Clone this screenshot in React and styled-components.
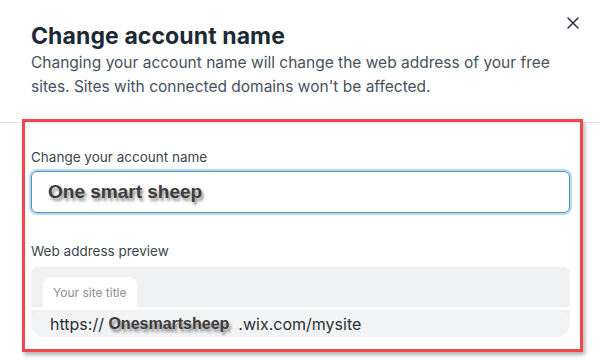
import styled, { createGlobalStyle } from "styled-components";

const GlobalStyle = createGlobalStyle`
  html, body {
    margin: 0;
    padding: 0;
    background: #ffffff;
  }
  body {
    font-family: "Inter", "Noto Sans", sans-serif;
  }
`;

const Modal = styled.div`
  position: relative;
  width: 600px;
  height: 361px;
  overflow: hidden;
  background: #ffffff;
`;

const Header = styled.div`
  box-sizing: border-box;
  height: 123px;
  padding: 22px 30px 0 31px;
  border-bottom: 1px solid #e3e5e8;
`;

const Title = styled.h1`
  margin: 0;
  font-size: 23px;
  line-height: 29px;
  font-weight: 700;
  color: #1c2a36;
  letter-spacing: 0.1px;
`;

const Subtitle = styled.p`
  margin: 0;
  font-size: 15.5px;
  line-height: 24px;
  color: #46525e;
`;

const CloseBtn = styled.button`
  position: absolute;
  top: 14px;
  right: 18px;
  width: 18px;
  height: 18px;
  padding: 0;
  border: none;
  background: none;
  display: flex;
  align-items: center;
  justify-content: center;
  cursor: pointer;
`;

const Highlight = styled.section`
  box-sizing: border-box;
  width: 561px;
  height: 233px;
  margin: -4px 0 0 22px;
  padding: 26px 10px 0 6px;
  border: 3px solid #f0474c;
  box-shadow: 2px 3px 4px rgba(0, 0, 0, 0.3);
  display: flex;
  flex-direction: column;
`;

const Label = styled.div`
  font-size: 13.5px;
  line-height: 18px;
  color: #3d4650;
  margin-bottom: ${(p) => p.$gap}px;
`;

const Input = styled.div`
  box-sizing: border-box;
  height: 42px;
  flex-shrink: 0;
  border: 1px solid #5f8fb4;
  border-radius: 6px;
  box-shadow: 0 0 0 2px #b3dcf8;
  display: flex;
  align-items: center;
  padding: 0 16px;
  margin-bottom: 29px;
`;

const BoldShadow = styled.span`
  font-family: "Liberation Sans", Arial, sans-serif;
  font-weight: 700;
  font-size: ${(p) => p.$size}px;
  color: #3c3c3c;
  text-shadow: 2px 3px 3px rgba(0, 0, 0, 0.45);
`;

const Preview = styled.div`
  flex-shrink: 0;
  background: #f0f1f3;
  border-radius: 6px 6px 14px 14px;
  display: flex;
  flex-direction: column;
`;

const TabBar = styled.div`
  display: flex;
  padding: 10px 12px 0;
  height: 30px;
  border-bottom: 3px solid #ffffff;
`;

const Tab = styled.div`
  background: #ffffff;
  border-radius: 8px 8px 0 0;
  padding: 0 10px;
  display: flex;
  align-items: center;
  font-size: 12px;
  color: #8a9098;
`;

const UrlBar = styled.div`
  height: 27px;
  border-radius: 14px;
  background: #f2f3f5;
  display: flex;
  align-items: center;
  padding: 0 19px;
  font-size: 16px;
  color: #2a3038;
  white-space: pre;
`;

export default function App() {
  return (
    <>
      <GlobalStyle />
      <Modal>
        <Header>
          <Title>Change account name</Title>
          <Subtitle>
            Changing your account name will change the web address of your free
            sites. Sites with connected domains won't be affected.
          </Subtitle>
        </Header>
        <CloseBtn aria-label="Close">
          <svg width="12" height="12" viewBox="0 0 12 12">
            <path
              d="M1 1 L11 11 M11 1 L1 11"
              stroke="#2b3440"
              strokeWidth="1.5"
              strokeLinecap="round"
            />
          </svg>
        </CloseBtn>
        <Highlight>
          <Label $gap={5}>Change your account name</Label>
          <Input>
            <BoldShadow $size={19}>One smart sheep</BoldShadow>
          </Input>
          <Label $gap={7}>Web address preview</Label>
          <Preview>
            <TabBar>
              <Tab>Your site title</Tab>
            </TabBar>
            <UrlBar>
              {"https:// "}
              <BoldShadow $size={16}>Onesmartsheep</BoldShadow>
              {"  .wix.com/mysite"}
            </UrlBar>
          </Preview>
        </Highlight>
      </Modal>
    </>
  );
}
